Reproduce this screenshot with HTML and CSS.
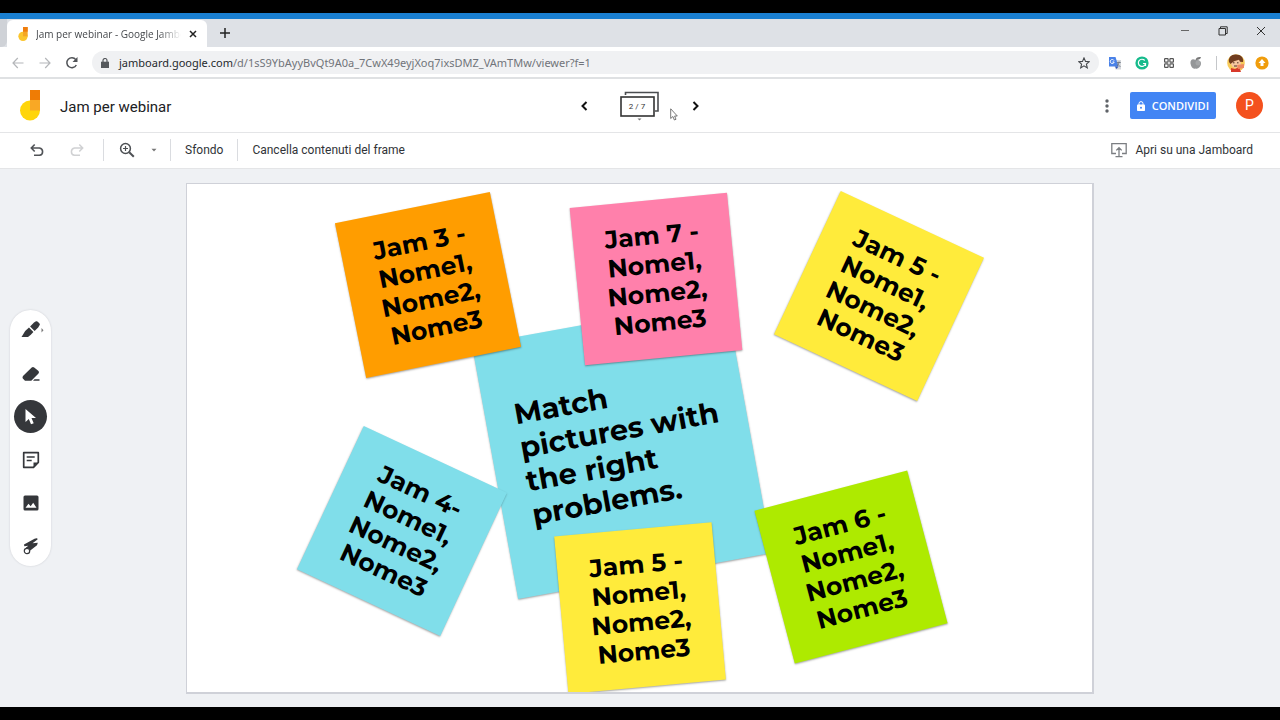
FILE: index.html
```html
<!DOCTYPE html>
<html lang="it">
<head>
<meta charset="utf-8">
<title>Jam per webinar - Google Jamboard</title>
<link rel="stylesheet" href="styles.css">
</head>
<body>
<div class="tabs">
  <span class="tab-prev"></span>
  <div class="tab">
    <svg class="favicon" viewBox="0 0 20 30"><circle cx="10" cy="20" r="10" fill="#fbc52d"/><path d="M10 0h10v20H10z" fill="#f5a623"/><path d="M10 0h10v10H10z" fill="#ef7d0e"/></svg>
    <span class="tab-title">Jam per webinar - Google Jambo</span>
    <button class="plain" aria-label="Chiudi scheda"><svg width="8" height="8" viewBox="0 0 8 8"><path d="M1 1l6 6M7 1L1 7" stroke="#222" stroke-width="1.5"/></svg></button>
  </div>
  <button class="plain new-tab" aria-label="Nuova scheda"><svg width="10" height="10" viewBox="0 0 10 10"><path d="M5 0v10M0 5h10" stroke="#222" stroke-width="1.5"/></svg></button>
  <div class="window-buttons">
    <button class="plain" aria-label="Riduci"><svg width="10" height="10" viewBox="0 0 10 10"><path d="M1 4.500h8" stroke="#666"/></svg></button>
    <button class="plain" aria-label="Ripristina"><svg width="10" height="10" viewBox="0 0 10 10" fill="none" stroke="#333"><path d="M1 2.500h6.500v6.500H1zM2.500 2.500V.8h6.700v6.700H7.500"/></svg></button>
    <button class="plain" aria-label="Chiudi"><svg width="10" height="10" viewBox="0 0 10 10"><path d="M1 1l8 8M9 1L1 9" stroke="#333"/></svg></button>
  </div>
</div>

<div class="address-bar">
  <button class="plain nav" aria-label="Indietro"><svg width="12" height="12" viewBox="0 0 12 12" fill="none" stroke="#b4b6b9" stroke-width="1.200"><path d="M11.500 6H1M5.800 1L1 6l4.800 5"/></svg></button>
  <button class="plain nav" aria-label="Avanti"><svg width="12" height="12" viewBox="0 0 12 12" fill="none" stroke="#b4b6b9" stroke-width="1.200"><path d="M.5 6H11M6.200 1L11 6l-4.800 5"/></svg></button>
  <button class="plain nav" aria-label="Ricarica"><svg width="14" height="14" viewBox="0 0 14 14"><path d="M11.300 9A5 5 0 1 1 10.800 3.600" fill="none" stroke="#505357" stroke-width="1.500"/><path d="M12.500 1v5h-5z" fill="#505357"/></svg></button>
  <div class="url-box">
    <svg width="8" height="10" viewBox="0 0 8 10"><path d="M0 3.700h8V10H0z" fill="#55585c"/><path d="M2 4V2.500a2 2 0 0 1 4 0V4" fill="none" stroke="#55585c" stroke-width="1.200"/></svg>
    <span class="url"><span class="host">jamboard.google.com</span>/d/1sS9YbAyyBvQt9A0a_7CwX49eyjXoq7ixsDMZ_VAmTMw/viewer?f=1</span>
    <button class="plain" aria-label="Aggiungi ai preferiti"><svg width="12" height="12" viewBox="0 0 12 12"><path d="M6 .9l1.500 3.500 3.800.3-2.900 2.500.9 3.700L6 8.900l-3.300 2 .9-3.700L.7 4.700l3.800-.3z" fill="none" stroke="#45484c" stroke-width="1.100"/></svg></button>
  </div>
  <div class="extensions">
    <button class="plain" aria-label="Google Traduttore"><svg width="14" height="14" viewBox="0 0 14 14"><path d="M5 4h8v9.500H7.500z" fill="#d5d8dc"/><path d="M1 1h6.500l3 9.500H1z" fill="#4a82e8"/><path d="M7 10.500h3.500L8.500 13z" fill="#2f55b5"/><path d="M6 4.500A2 2 0 1 0 6.200 6H4.500" fill="none" stroke="#fff"/><path d="M8.800 6.500h4M11 5.500v1c-.2 1.500-1 2.800-2 3.500M9.500 7.500c.5 1.500 1.500 2.500 3 3" fill="none" stroke="#69717c" stroke-width=".8"/></svg></button>
    <button class="plain" aria-label="Grammarly"><svg width="14" height="14" viewBox="0 0 14 14"><circle cx="7" cy="7" r="6.600" fill="#16bb8c"/><path d="M9.700 4.500A3.600 3.600 0 1 0 10.500 7.500H8M10.500 7v3" fill="none" stroke="#fff" stroke-width="1.200"/></svg></button>
    <button class="plain" aria-label="Griglia"><svg width="14" height="14" viewBox="0 0 14 14" fill="none" stroke="#555" stroke-width="1.200"><rect x="2.600" y="2.600" width="3.500" height="3.500" rx=".6"/><rect x="7.900" y="2.600" width="3.500" height="3.500" rx=".6"/><rect x="2.600" y="7.900" width="3.500" height="3.500" rx=".6"/><rect x="7.900" y="7.900" width="3.500" height="3.500" rx=".6"/></svg></button>
    <button class="plain" aria-label="Mela"><svg width="14" height="14" viewBox="0 0 14 14"><path d="M6.500 4C3.500 2 1 4 1.500 7.500 2 11 4 13.500 6.500 12.500 9 13.500 11.500 11 12 8c0-2-.5-4-5.500-4z" fill="#949698"/><path d="M6.500 4C7 2 8.500.8 12 1.200 11.500 3 9.500 4.200 6.500 4z" fill="#777"/><circle cx="9" cy="7" r="2.500" fill="#a4a6a8"/></svg></button>
    <span class="divider short"></span>
    <button class="plain profile" aria-label="Profilo"><svg width="18" height="18" viewBox="0 0 18 18"><circle cx="9" cy="9" r="8.800" fill="#f7ca58"/><circle cx="9" cy="9" r="5" fill="#f6c7a0"/><path d="M2 8C1 3 5 0 9 .5c5 0 8 3.500 7 7.500l-3-.3-1-2-5 1.500L3.500 10z" fill="#703c20"/><path d="M4 14l4 1 4-2 2 5H4z" fill="#d8392b"/><path d="M10 11l7-1v4l-6 1z" fill="#ef8a62"/><path d="M6 8.800h1.500M10 8.800h1.500M7 12h3" stroke="#513124"/></svg></button>
    <button class="plain" aria-label="Aggiorna"><svg width="14" height="14" viewBox="0 0 14 14"><circle cx="7" cy="7" r="6.600" fill="#f09d0c"/><path d="M7 3l3.500 4h-2v3h-3V7h-2z" fill="#fff"/></svg></button>
  </div>
</div>

<header class="header">
  <div class="header-side start">
    <svg class="logo" viewBox="0 0 20 31"><circle cx="10" cy="20.500" r="10" fill="#ffd50a"/><path d="M10 10h10v10.500H10z" fill="#f9a825"/><path d="M10 0h10v10H10z" fill="#ef7c05"/></svg>
    <h1 class="title">Jam per webinar</h1>
  </div>
  <div class="pager">
    <button class="plain" aria-label="Frame precedente"><svg width="8" height="12" viewBox="0 0 8 12"><path d="M6.500 2L2.500 6l4 4" fill="none" stroke="#111" stroke-width="2"/></svg></button>
    <button class="plain frames" aria-label="Mostra frame">
      <svg width="40" height="30" viewBox="0 0 40 30"><path d="M5.500 4V1.500h32.500V20h-3" fill="none" stroke="#4b4d50" stroke-width="1.600"/><rect x="1" y="6" width="33" height="19" fill="#fff" stroke="#333" stroke-width="1.600"/><path d="M17.500 27.500h4l-2 2z" fill="#777"/></svg>
      <span class="frame-count">2 / 7</span>
    </button>
    <button class="plain" aria-label="Frame successivo"><svg width="8" height="12" viewBox="0 0 8 12"><path d="M1.500 2l4 4-4 4" fill="none" stroke="#111" stroke-width="2"/></svg></button>
    <svg class="pointer" width="8" height="13" viewBox="0 0 8 13"><path d="M.7.8v9.700l2.200-2 1.500 3.500 1.600-.7L4.600 8h2.700z" fill="#fff" stroke="#555" stroke-width=".8"/></svg>
  </div>
  <div class="header-side end">
    <button class="plain" aria-label="Altre azioni"><svg width="6" height="14" viewBox="0 0 6 14" fill="#5f6368"><circle cx="3" cy="2" r="1.700"/><circle cx="3" cy="7" r="1.700"/><circle cx="3" cy="12" r="1.700"/></svg></button>
    <button class="share"><svg width="8" height="10" viewBox="0 0 8 10"><rect y="3.500" width="8" height="6.500" rx=".8" fill="#fff"/><path d="M2 4V2.600a2 2 0 0 1 4 0V4" fill="none" stroke="#fff"/><circle cx="4" cy="6.700" r="1" fill="#4285f4"/></svg>CONDIVIDI</button>
    <button class="avatar" aria-label="Account">P</button>
  </div>
</header>

<div class="toolbar">
  <button class="plain tool-icon" aria-label="Annulla"><svg width="14" height="14" viewBox="0 0 14 14" fill="none" stroke="#505357" stroke-width="1.600"><path d="M1.500 5h8a3.700 3.700 0 0 1 0 7.300H4M4.700 1.500L1.300 5l3.400 3.500"/></svg></button>
  <button class="plain tool-icon redo" aria-label="Ripeti"><svg width="14" height="14" viewBox="0 0 14 14" fill="none" stroke="#d0d1d3" stroke-width="1.500"><path d="M12.500 5h-8a3.700 3.700 0 0 0 0 7.300H10M9.300 1.500L12.700 5 9.300 8.500"/></svg></button>
  <span class="divider"></span>
  <button class="plain zoom" aria-label="Zoom"><svg width="16" height="16" viewBox="0 0 16 16" fill="none" stroke="#4d5054" stroke-width="1.500"><circle cx="6.500" cy="6.500" r="4.900"/><path d="M10.200 10.200l4.600 4.600" stroke-width="2"/><path d="M6.500 4v5M4 6.500h5" stroke-width="1.200"/></svg><svg width="6" height="4" viewBox="0 0 6 4"><path d="M.5.8h5L3 3.500z" fill="#777"/></svg></button>
  <span class="divider"></span>
  <button class="plain label">Sfondo</button>
  <span class="divider"></span>
  <button class="plain label">Cancella contenuti del frame</button>
  <button class="plain label open"><svg width="16" height="16" viewBox="0 0 16 16" fill="none" stroke="#7b7e82" stroke-width="1.300"><path d="M5 11.500H.8V1.700h14.400v9.800H11M8 14V6M5.300 8.400L8 5.700l2.700 2.700M4.500 14.700h7"/></svg>Apri su una Jamboard</button>
</div>

<main class="workspace">
  <nav class="tools" aria-label="Strumenti">
    <button class="plain tool" aria-label="Penna"><svg width="26" height="20" viewBox="-2 0 26 20" fill="#35373b"><path d="M14 1.500l2-1.200q1-.4 1.800.4l1.700 1.700q.7 1 0 1.900l-1.300 2.100-3.600 3.600-4.500-4.500z"/><path d="M9 6.500l4.400 4.400-2.600 2.800-2.800 2.300H1.500l3.700-6z"/><path d="M21.500 7v4.500l2-2.200z" fill="#777"/></svg></button>
    <button class="plain tool" aria-label="Gomma"><svg width="18" height="16" viewBox="0 0 18 16" fill="#35373b"><path d="M1 10L9.700 1.500q1.300-1 2.500 0L16.500 5q1 1.200 0 2.400L9.300 14.800H3L.8 12.500q-.7-1.200.2-2.500z"/><path d="M12.500 13.300h5v1.500h-6.500z"/></svg></button>
    <button class="plain tool selected" aria-label="Seleziona"><svg width="14" height="18" viewBox="0 0 14 18"><path d="M1.500 1v13l3.300-3 2.200 5.300 2.700-1.100L7.500 10H12z" fill="#fff"/></svg></button>
    <button class="plain tool" aria-label="Nota adesiva"><svg width="18" height="18" viewBox="0 0 18 18"><path d="M1.700 1.700h14.600v9.800l-4.800 4.800H1.700z" fill="none" stroke="#35373b" stroke-width="1.700" stroke-linejoin="round"/><path d="M11.500 16v-4.500H16z" fill="#35373b"/><path d="M4.700 6h8M4.700 9.500h5" stroke="#35373b" stroke-width="1.500"/></svg></button>
    <button class="plain tool" aria-label="Immagine"><svg width="16" height="16" viewBox="0 0 16 16"><rect x=".5" y=".5" width="15" height="15" rx="1.500" fill="#35373b"/><path d="M2.500 12.800l3-4 2.200 2.400 2.500-3.400 3.300 5z" fill="#fff"/></svg></button>
    <button class="plain tool" aria-label="Laser"><svg width="16" height="18" viewBox="0 0 16 18" fill="#35373b"><path d="M1 7.500L11.500 1.800q3.500-1.300 3 .8L9.500 6.300l5.300-.5-.8 2.500-7.700 6-3.500-3.600 2.500-1.900-4 .5z"/><circle cx="4" cy="14" r="2.700" fill="#fff" stroke="#35373b" stroke-width="1.200"/></svg></button>
  </nav>
  <div class="board">
    <article class="note big">Match pictures with the right problems.</article>
    <article class="note jam4">Jam 4-<br>Nome1,<br>Nome2,<br>Nome3</article>
    <article class="note jam3">Jam 3 -<br>Nome1,<br>Nome2,<br>Nome3</article>
    <article class="note jam7">Jam 7 -<br>Nome1,<br>Nome2,<br>Nome3</article>
    <article class="note jam5-top">Jam 5 -<br>Nome1,<br>Nome2,<br>Nome3</article>
    <article class="note jam6">Jam 6 -<br>Nome1,<br>Nome2,<br>Nome3</article>
    <article class="note jam5-bottom">Jam 5 -<br>Nome1,<br>Nome2,<br>Nome3</article>
  </div>
</main>
</body>
</html>
```
FILE: styles.css
```css
* { box-sizing: border-box; }

body {
  margin: 0;
  min-height: 100vh;
  display: flex;
  flex-direction: column;
  border-top: 13px solid #000;
  border-bottom: 13px solid #000;
  background: #fff;
  color: #202124;
  font-family: Roboto, sans-serif;
}

svg { display: block; flex: none; }

.plain {
  display: flex;
  align-items: center;
  justify-content: center;
  padding: 0;
  border: 0;
  background: none;
  color: inherit;
  font: inherit;
}

/* Browser window */
.tabs {
  display: flex;
  height: 34px;
  border-top: 6px solid #1a7fd0;
  background: #dee1e6;
}
.tab-prev { width: 7px; background: #cfd2d7; border-radius: 0 0 6px 0; }
.tab {
  display: flex;
  align-items: center;
  gap: 8px;
  width: 200px;
  margin-top: 1px;
  padding: 0 10px 0 11px;
  border-radius: 6px 6px 0 0;
  background: #fff;
}
.favicon { width: 10px; height: 14px; }
.tab-title {
  flex: 1;
  min-width: 0;
  white-space: nowrap;
  color: #45484c;
  font: 10px/16px "Open Sans", sans-serif;
  -webkit-mask-image: linear-gradient(to right, #000 85%, transparent);
  mask-image: linear-gradient(to right, #000 85%, transparent);
}
.new-tab { width: 36px; }
.window-buttons {
  display: flex;
  align-items: center;
  gap: 28px;
  margin-left: auto;
  padding: 0 14px 4px 0;
}

.address-bar {
  display: flex;
  align-items: center;
  height: 32px;
  padding: 1px 11px 0 12px;
  border-bottom: 2px solid #dfe1e3;
}
.nav { width: 12px; margin-right: 15px; }
.nav + .nav + .nav { margin-right: 14px; }
.url-box {
  flex: 1;
  display: flex;
  align-items: center;
  gap: 10px;
  height: 23px;
  padding: 0 9px;
  border-radius: 12px;
  background: #f0f1f3;
}
.url {
  flex: 1;
  color: #70747a;
  font: 11px/16px "Noto Sans", sans-serif;
}
.host { color: #25282c; }
.extensions {
  display: flex;
  align-items: center;
  gap: 13px;
  margin-left: 9px;
}
.profile { margin: 0 -3px; }

/* Jamboard header */
.header {
  display: flex;
  align-items: center;
  height: 54px;
  padding: 0 17px;
  border-bottom: 1px solid #e4e5e7;
}
.header-side { flex: 1; display: flex; align-items: center; gap: 20px; }
.start { padding-left: 3px; }
.end { justify-content: flex-end; }
.logo { width: 20px; height: 31px; }
.title { margin: 0; padding-top: 2px; font-size: 15px; line-height: 20px; font-weight: 400; }
.pager {
  position: relative;
  display: flex;
  align-items: center;
  gap: 32px;
  padding-right: 3px;
}
.frames { position: relative; }
.frame-count {
  position: absolute;
  inset: 6px 6px auto 0;
  color: #333;
  font-size: 8px;
  line-height: 20px;
  text-align: center;
}
.pointer { position: absolute; right: 25px; bottom: 0; }
.share {
  display: flex;
  align-items: center;
  gap: 7px;
  height: 27px;
  padding: 0 7px;
  border: 0;
  border-radius: 2px;
  background: #4285f4;
  color: #fff;
  font: 600 11px/16px "Open Sans", sans-serif;
}
.avatar {
  width: 27px;
  height: 27px;
  padding: 0;
  border: 0;
  border-radius: 50%;
  background: #f4511e;
  color: #fff;
  font: 14px/27px Roboto, sans-serif;
}

.toolbar {
  display: flex;
  align-items: center;
  height: 36px;
  padding: 0 27px 2px 30px;
  border-bottom: 1px solid #e4e5e7;
}
.tool-icon { width: 14px; margin-right: 26px; }
.redo { margin-right: 19px; }
.divider { width: 1px; height: 22px; background: #dadce0; }
.short { height: 14px; background: #c5c7ca; }
.zoom { gap: 16px; padding: 0 13px 0 15px; }
.label {
  padding: 0 14px;
  color: #303337;
  font-size: 12px;
  line-height: 16px;
}
.open { gap: 8px; margin-left: auto; padding: 0; }

/* Canvas area */
.workspace {
  position: relative;
  flex: 1;
  display: flex;
  justify-content: center;
  padding: 14px 60px 13px;
  background: #eff1f4;
}
.tools {
  position: absolute;
  left: 10px;
  top: 141px;
  display: flex;
  flex-direction: column;
  gap: 10px;
  padding: 4px;
  border-radius: 21px;
  background: #fff;
  box-shadow: 0 0 2px #c9cbd0;
}
.tool { width: 33px; height: 33px; border-radius: 50%; }
.selected { background: #35373b; }
.board {
  position: relative;
  aspect-ratio: 908 / 511;
  min-height: 511px;
  overflow: hidden;
  border: 1px solid #cfd1d8;
  border-bottom-width: 2px;
  border-right-width: 2px;
  background: #fff;
}
.note {
  position: absolute;
  display: flex;
  align-items: center;
  justify-content: center;
  width: 158px;
  height: 158px;
  padding-bottom: 1px;
  box-shadow: 0 1px 2px rgba(0, 0, 0, 0.35);
  color: #000;
  font: 700 25px/29px Montserrat, Inter, sans-serif;
  text-align: center;
}
.big {
  left: 306px;
  top: 136px;
  width: 258px;
  height: 258px;
  padding: 0 20px 4px 29px;
  background: #80deea;
  font-size: 29px;
  line-height: 34px;
  text-align: left;
  transform: rotate(-10.3deg);
}
.jam3 { left: 162px; top: 22px; background: #ff9d00; transform: rotate(-11.4deg); }
.jam4 { left: 136px; top: 268px; background: #80deea; transform: rotate(25deg); }
.jam7 { left: 390px; top: 16px; background: #ff80ab; transform: rotate(-5.6deg); }
.jam5-top { left: 613px; top: 33px; background: #ffeb3b; transform: rotate(25deg); }
.jam6 { left: 585px; top: 304px; background: #aeea00; transform: rotate(-14.8deg); }
.jam5-bottom { left: 374px; top: 345px; background: #ffeb3b; transform: rotate(-5.2deg); }
```
